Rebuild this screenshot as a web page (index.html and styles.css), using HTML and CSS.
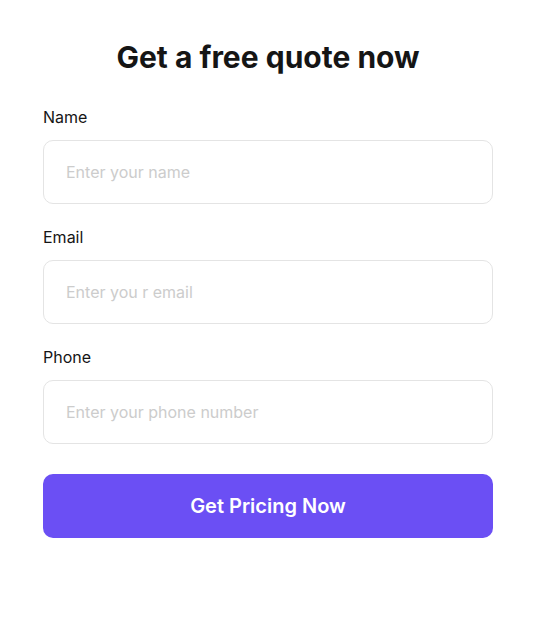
FILE: index.html
```html
<!DOCTYPE html>
<html lang="en">
<head>
<meta charset="utf-8">
<title>Get a free quote now</title>
<link rel="stylesheet" href="styles.css">
</head>
<body>
<main class="quote">
  <h1 class="quote__title">Get a free quote now</h1>
  <form class="quote__form">
    <div class="field">
      <label class="field__label" for="name">Name</label>
      <input class="field__input" id="name" type="text" placeholder="Enter your name">
    </div>
    <div class="field">
      <label class="field__label" for="email">Email</label>
      <input class="field__input" id="email" type="email" placeholder="Enter you r email">
    </div>
    <div class="field">
      <label class="field__label" for="phone">Phone</label>
      <input class="field__input" id="phone" type="tel" placeholder="Enter your phone number">
    </div>
    <button class="quote__button" type="button">Get Pricing Now</button>
  </form>
</main>
</body>
</html>
```
FILE: styles.css
```css
* { box-sizing: border-box; }
html, body { margin: 0; padding: 0; background: #fff; }
body {
  font-family: Inter, "Noto Sans", sans-serif;
  color: #111;
}
.quote {
  width: 450px;
  margin: 0 auto;
  padding-top: 39px;
}
.quote__title {
  margin: 0 0 30px;
  font-size: 30px;
  line-height: 36px;
  font-weight: 700;
  text-align: center;
  color: #151515;
}
.quote__form {
  display: flex;
  flex-direction: column;
}
.field {
  display: flex;
  flex-direction: column;
  margin-bottom: 21px;
}
.field__label {
  font-size: 16px;
  line-height: 24px;
  font-weight: 400;
  color: #151515;
  margin-bottom: 11px;
}
.field__input {
  height: 64px;
  border: 1px solid #e4e4e4;
  border-radius: 10px;
  padding: 0 22px;
  font-family: inherit;
  font-size: 16px;
  color: #151515;
  outline: none;
  background: #fff;
}
.field__input::placeholder { color: #cccccc; }
.quote__button {
  margin-top: 9px;
  height: 64px;
  border: none;
  border-radius: 10px;
  background: #6b4ff4;
  color: #fff;
  font-family: inherit;
  font-size: 20px;
  font-weight: 600;
  cursor: pointer;
}
```
